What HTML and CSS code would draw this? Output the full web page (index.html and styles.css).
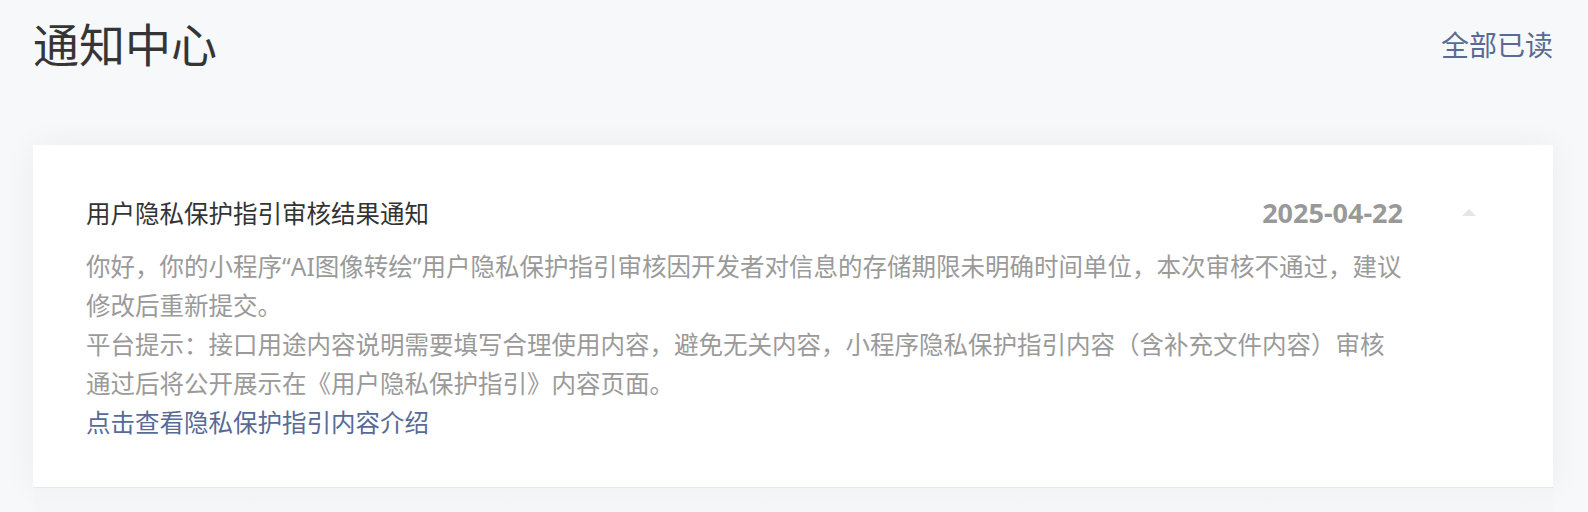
FILE: index.html
```html
<!DOCTYPE html>
<html lang="zh-CN">
<head>
  <meta charset="UTF-8" />
  <meta name="viewport" content="width=device-width, initial-scale=1.0" />
  <title>通知中心</title>
  <link rel="stylesheet" href="styles.css">
</head>
<body>

<div class="page">
  <div class="top">
    <h1>通知中心</h1>
    <a href="#" class="read-all">全部已读</a>
  </div>

  <div class="notice">
    <div class="notice-main">
      <div class="notice-head">
        <span class="notice-title">用户隐私保护指引审核结果通知</span>
        <span class="notice-date">2025-04-22</span>
      </div>
      <div class="notice-body">
        <p>你好，你的小程序“AI图像转绘”用户隐私保护指引审核因开发者对信息的存储期限未明确时间单位，本次审核不通过，建议修改后重新提交。</p>
        <p>平台提示：接口用途内容说明需要填写合理使用内容，避免无关内容，小程序隐私保护指引内容（含补充文件内容）审核通过后将公开展示在《用户隐私保护指引》内容页面。</p>
        <a href="#" class="notice-link">点击查看隐私保护指引内容介绍</a>
      </div>
    </div>
    <div class="notice-toggle"><span class="caret"></span></div>
  </div>

  <div class="notice-next"></div>
</div>

</body>
</html>
```

FILE: styles.css
```css
body { margin: 0; background: #f7f8fa; font-family: "Noto Sans", "Noto Sans CJK SC", sans-serif; }
.page { padding: 14px 35px 0 33px; }
.top { display: flex; justify-content: space-between; align-items: center; height: 60px; }
h1 { margin: 0; font-size: 46px; font-weight: normal; color: #353535; line-height: 60px; }
.read-all { font-size: 28px; color: #576b95; text-decoration: none; }
.notice { display: flex; background: #fff; margin-top: 71px; padding: 50px 77px 45px 53px; box-shadow: 0 0 30px rgba(0,0,0,0.05); border-bottom: 1px solid #e6e7eb; }
.notice-main { width: 1320px; }
.notice-head { display: flex; justify-content: space-between; align-items: center; height: 34px; padding-right: 3px; }
.notice-title { font-size: 24.5px; color: #333; }
.notice-date { font-size: 27px; font-weight: bold; color: #999; }
.notice-body { margin-top: 18px; font-size: 24.5px; line-height: 39px; color: #9a9a9a; }
.notice-body p { margin: 0; }
.notice-link { color: #576b95; text-decoration: none; }
.notice-toggle { margin-left: 56px; height: 34px; display: flex; align-items: center; }
.caret { display: block; width: 0; height: 0; border-left: 7px solid transparent; border-right: 7px solid transparent; border-bottom: 7px solid #e4e4ea; }
.notice-next { height: 40px; background: linear-gradient(#f3f4f6, #f7f8fa); }
```
